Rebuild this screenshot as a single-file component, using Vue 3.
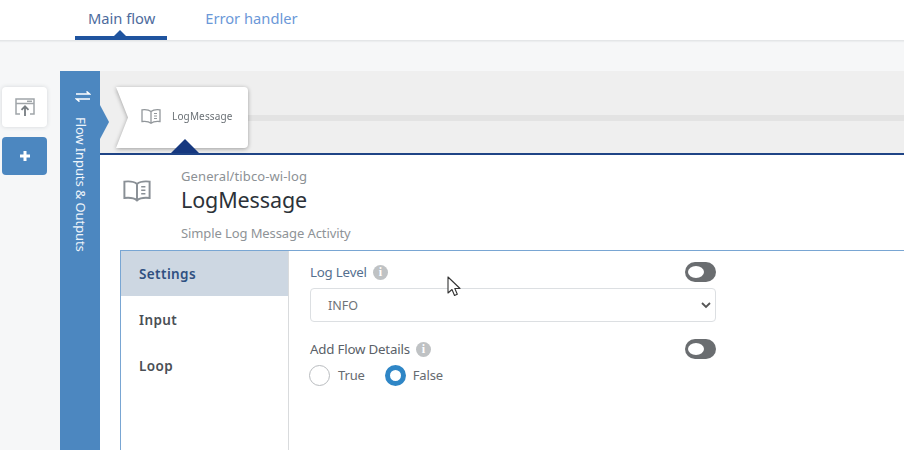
<script setup>
const tabs = [
  { label: 'Main flow', active: true },
  { label: 'Error handler', active: false }
]
const sideItems = ['Settings', 'Input', 'Loop']
</script>

<template>
  <div class="page">
    <header class="tabs">
      <div v-for="t in tabs" :key="t.label" class="tab" :class="{ active: t.active }">{{ t.label }}</div>
    </header>
    <div class="body">
      <aside class="tools">
        <button class="tool light">
          <svg width="22" height="20" viewBox="0 0 22 20" fill="none" stroke="#a0a5a9" stroke-width="1.500">
            <path d="M6 17H2V2h18v15h-4" />
            <path d="M2 6.500h18" />
            <path d="M13 4.300h5" />
            <path d="M11 19V9.500M7.500 12.800 11 9.300l3.500 3.500" stroke="#777d82" stroke-width="1.800" />
          </svg>
        </button>
        <button class="tool blue">
          <svg width="12" height="12" viewBox="0 0 12 12"><path d="M6 1v10M1 6h10" stroke="#fff" stroke-width="3" /></svg>
        </button>
      </aside>
      <nav class="rail">
        <svg class="swap" width="16" height="11" viewBox="0 0 16 11" fill="none" stroke="#fff" stroke-width="1.600">
          <path d="M1 3h13.500L11.500 .5M15 8H1.500l3 2.500" />
        </svg>
        <span class="rail-text">Flow Inputs &amp; Outputs</span>
        <i class="rail-tip"></i>
      </nav>
      <main class="main">
        <section class="strip">
          <div class="track"></div>
          <div class="node-wrap">
            <div class="node">
              <svg width="20" height="16" viewBox="0 0 20 16" fill="none" stroke="#92979b" stroke-width="1.300">
                <path d="M10 3.500C8 1.800 4.500 1.400 1 1.800v11.700c3.500-.4 7 0 9 1.700 2-1.700 5.500-2.100 9-1.700V1.800c-3.500-.4-7 0-9 1.700Zm0 0v11.700" />
                <path d="M13 5.500h3M13 8h3M13 10.500h3" stroke-width="1" />
              </svg>
              <span>LogMessage</span>
            </div>
          </div>
          <i class="node-tip"></i>
        </section>
        <section class="detail">
          <div class="head">
            <svg class="book" width="28" height="24" viewBox="0 0 20 17" fill="none" stroke="#8a9096" stroke-width="1.400">
              <path d="M10 3.500C8 1.800 4.500 1.400 1 1.800v11.700c3.500-.4 7 0 9 1.700 2-1.700 5.500-2.100 9-1.700V1.800c-3.500-.4-7 0-9 1.700Zm0 0v11.700" />
              <path d="M13 5.500h3M13 8h3M13 10.500h3" stroke-width="1" />
            </svg>
            <div class="head-text">
              <div class="path">General/tibco-wi-log</div>
              <h1>LogMessage</h1>
              <div class="desc">Simple Log Message Activity</div>
            </div>
          </div>
          <div class="panel">
            <ul class="menu">
              <li v-for="(s, i) in sideItems" :key="s" :class="{ on: i === 0 }">{{ s }}</li>
            </ul>
            <div class="form">
              <div class="row first">
                <label class="lbl blue-lbl">Log Level <b class="info">i</b></label>
                <span class="toggle"></span>
              </div>
              <div class="select">
                <span>INFO</span>
                <svg width="10" height="7" viewBox="0 0 10 7" fill="none" stroke="#555" stroke-width="1.800"><path d="m1 1 4 4 4-4" /></svg>
              </div>
              <div class="row second">
                <label class="lbl">Add Flow Details <b class="info">i</b></label>
                <span class="toggle"></span>
              </div>
              <div class="radios">
                <span class="radio"></span><span class="rtext">True</span>
                <span class="radio checked"></span><span class="rtext">False</span>
              </div>
              <svg class="cursor" width="14" height="22" viewBox="0 0 14 22">
                <path d="M1 1v16l4-3.500 2.500 6 2.800-1.200L7.800 12.500H13Z" fill="#fff" stroke="#333" stroke-width="1.100" stroke-linejoin="round" />
              </svg>
            </div>
          </div>
        </section>
      </main>
    </div>
  </div>
</template>

<style>
html, body { margin: 0; overflow: hidden; background: #f6f7f8; }
</style>

<style scoped>
.page { width: 904px; height: 450px; overflow: hidden; background: #f6f7f8; font-family: "Noto Sans", "Open Sans", sans-serif; display: flex; flex-direction: column; }
.tabs { height: 41px; flex: none; box-sizing: border-box; background: #fff; border-bottom: 1px solid #e4e6e8; padding-left: 75px; display: flex; box-shadow: 0 1px 1px #eceeef; }
.tab { height: 40px; box-sizing: border-box; padding: 8px 13px 0; margin-right: 25px; font-size: 14.700px; line-height: 20px; color: #6b98d8; position: relative; }
.tab.active { color: #4d6b9d; border-bottom: 4px solid #1f549f; padding-right: 12px; }
.tab.active::after { content: ""; position: absolute; left: 39px; bottom: 0; border: 6px solid transparent; border-top: 0; border-bottom-color: #1f549f; }
.body { flex: 1; display: flex; padding-top: 30px; min-height: 0; }
.tools { width: 60px; flex: none; box-sizing: border-box; padding: 16px 0 0 2px; display: flex; flex-direction: column; gap: 10px; }
.tool { width: 45px; border: 0; padding: 0; display: flex; align-items: center; justify-content: center; border-radius: 4px; }
.tool.light { height: 40px; background: #fff; box-shadow: 0 0 4px #d3d6d9; }
.tool.blue { height: 38px; background: #4c87c0; }
.rail { width: 40px; flex: none; background: #4c87c0; position: relative; display: flex; flex-direction: column; align-items: center; padding-top: 20px; box-sizing: border-box; z-index: 2; }
.swap { transform: translateX(3px); }
.rail-text { writing-mode: vertical-rl; color: #eef4fa; font-size: 13px; line-height: 16px; margin-top: 15px; white-space: nowrap; letter-spacing: -.1px; transform: translateX(1px); }
.rail-tip { position: absolute; left: 40px; top: 34px; width: 9px; height: 34px; background: #4c87c0; clip-path: polygon(0 0, 100% 50%, 0 100%); }
.main { flex: 1; min-width: 0; display: flex; flex-direction: column; }
.strip { height: 84px; flex: none; background: #efefef; position: relative; box-sizing: border-box; border-bottom: 2px solid #1f4486; }
.track { position: absolute; left: 140px; right: 0; top: 44px; height: 6px; background: #e3e3e3; }
.node-wrap { position: absolute; left: 16px; top: 16px; filter: drop-shadow(0 1px 2px rgba(0,0,0,.35)); }
.node { width: 132px; height: 61px; background: #fff; border-radius: 0 4px 4px 0; clip-path: polygon(0 0, 100% 0, 100% 100%, 0 100%, 12px 50%); display: flex; align-items: center; padding: 0 0 3px 25px; box-sizing: border-box; gap: 11px; font-size: 10px; letter-spacing: .15px; color: #6a7075; }
.node-tip { position: absolute; left: 71px; top: 68px; border: 14px solid transparent; border-top: 0; border-bottom-color: #16387f; }
.detail { flex: 1; background: #fff; min-height: 0; display: flex; flex-direction: column; padding-left: 20px; }
.head { height: 95px; flex: none; display: flex; box-sizing: border-box; position: relative; padding-left: 61px; }
.book { position: absolute; left: 3px; top: 24px; }
.head-text { padding-top: 12px; }
.path { font-size: 13px; line-height: 18px; color: #8c9195; letter-spacing: .1px; }
h1 { margin: 0; font-size: 21.500px; line-height: 30px; font-weight: 400; color: #2c3239; letter-spacing: -.1px; }
.desc { margin-top: 9px; font-size: 13px; line-height: 18px; color: #8e9397; letter-spacing: -.1px; }
.panel { flex: 1; display: flex; border: 1px solid #79a6d3; border-right: 0; border-bottom: 0; min-height: 0; }
.menu { width: 167px; flex: none; margin: 0; padding: 0; list-style: none; border-right: 1px solid #d9dbdd; }
.menu li { height: 46px; line-height: 48px; padding-left: 18px; font-size: 13.500px; font-weight: 600; letter-spacing: .4px; color: #4a4f55; }
.menu li.on { height: 45px; line-height: 47px; background: #cdd7e2; color: #2f5081; }
.form { flex: 1; position: relative; padding-left: 21px; width: 406px; max-width: 406px; }
.row { display: flex; justify-content: space-between; align-items: center; height: 20px; }
.row.first { margin-top: 11px; }
.row.second { margin-top: 17px; }
.lbl { font-size: 13.300px; line-height: 20px; color: #5a6168; letter-spacing: -.2px; display: flex; align-items: center; gap: 6px; }
.blue-lbl { color: #55708f; }
.info { width: 15px; height: 15px; border-radius: 50%; background: #bfc2c4; color: #fff; font: 700 12px/15px "Liberation Serif", serif; text-align: center; }
.toggle { width: 31px; height: 20px; border-radius: 10px; background: #6a6d70; position: relative; }
.toggle::after { content: ""; position: absolute; left: 3px; top: 4px; width: 16px; height: 12px; border-radius: 50%; background: #fff; }
.select { margin-top: 6px; height: 34px; box-sizing: border-box; border: 1px solid #dcdfe2; border-radius: 4px; display: flex; align-items: center; justify-content: space-between; padding: 0 4px 0 17px; font-size: 12.500px; color: #6f7478; }
.radios { display: flex; align-items: center; margin-top: 6px; height: 20px; margin-left: -1px; }
.radio { width: 19px; height: 19px; border: 1px solid #b9bcbf; border-radius: 50%; background: #fff; margin-right: 8px; flex: none; }
.radio.checked { width: 11px; height: 11px; border: 5px solid #2f86c6; margin-right: 7px; }
.rtext { font-size: 13px; color: #666b70; margin-right: 20px; letter-spacing: -.15px; }
.cursor { position: absolute; left: 158px; top: 25px; }
</style>
